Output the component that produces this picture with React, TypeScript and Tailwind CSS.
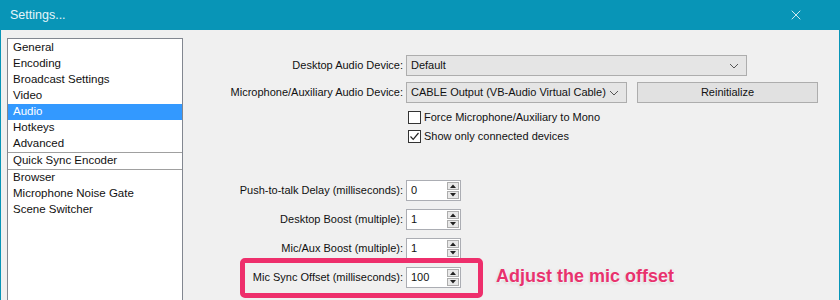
import { X } from "lucide-react";

const navItems = [
  ["General", "Encoding", "Broadcast Settings", "Video", "Audio", "Hotkeys", "Advanced"],
  ["Quick Sync Encoder"],
  ["Browser", "Microphone Noise Gate", "Scene Switcher"],
];

function Chevron() {
  return (
    <svg width="10" height="6" viewBox="0 0 10 6" className="shrink-0">
      <path d="M1 1 L5 5 L9 1" fill="none" stroke="#555" strokeWidth="1" />
    </svg>
  );
}

function Combo({ value, className }: { value: string; className: string }) {
  return (
    <div
      className={`h-[21px] flex items-center justify-between pl-[4px] pr-[7px] border border-[#adadad] bg-[#e5e5e5] text-[#111] whitespace-nowrap ${className}`}
    >
      <span>{value}</span>
      <Chevron />
    </div>
  );
}

function Check({ checked, label }: { checked?: boolean; label: string }) {
  return (
    <div className="h-[19px] flex items-center gap-[3px] ml-[2px]">
      <div className="w-[13px] h-[13px] border border-[#333] bg-white flex items-center justify-center">
        {checked && (
          <svg width="11" height="11" viewBox="0 0 11 11">
            <path d="M1.5 5.5 L4.2 8.3 L9.5 2" fill="none" stroke="#222" strokeWidth="1.2" />
          </svg>
        )}
      </div>
      <span>{label}</span>
    </div>
  );
}

function Spin({ value }: { value: string }) {
  return (
    <div className="w-[55px] h-[21px] flex items-center border border-[#abadb3] bg-white">
      <span className="flex-1 pl-[4px]">{value}</span>
      <div className="flex flex-col gap-[1px] mr-[1px]">
        <div className="w-[12px] h-[8px] border border-[#adadad] bg-[#e9e9e9] flex items-center justify-center">
          <svg width="6" height="4" viewBox="0 0 6 4">
            <path d="M0 4 L3 0.5 L6 4 Z" fill="#222" />
          </svg>
        </div>
        <div className="w-[12px] h-[8px] border border-[#adadad] bg-[#e9e9e9] flex items-center justify-center">
          <svg width="6" height="4" viewBox="0 0 6 4">
            <path d="M0 0 L3 3.5 L6 0 Z" fill="#222" />
          </svg>
        </div>
      </div>
    </div>
  );
}

function Row({ label, children }: { label: string; children: React.ReactNode }) {
  return (
    <div className="flex items-center">
      <div className="w-[223px] pr-[3px] text-right shrink-0 whitespace-nowrap">{label}</div>
      {children}
    </div>
  );
}

export default function App() {
  return (
    <div
      className="w-[840px] h-[300px] overflow-hidden flex flex-col text-[11px] leading-none text-[#111]"
      style={{ fontFamily: '"Liberation Sans", Arial, sans-serif' }}
    >
      <div className="h-[30px] shrink-0 bg-[#0895b7] flex items-center justify-between pl-[10px] pr-[36px] text-[#e6f6fa]">
        <span className="text-[12.5px]">Settings...</span>
        <X size={16} strokeWidth={1.2} className="text-white" />
      </div>

      <div className="flex-1 flex bg-[#f0f0f0] border-x border-[#0895b7]">
        <div className="pl-[6px] pt-[8px]">
          <div className="w-[176px] h-[300px] border border-[#828790] bg-white pt-[1px]">
            {navItems.map((group, gi) => (
              <div key={gi} className={gi > 0 ? "border-t border-[#a0a0a0]" : ""}>
                {group.map((item) => (
                  <div
                    key={item}
                    className={`h-[16px] flex items-center pl-[5px] text-[11.5px] ${
                      item === "Audio" ? "bg-[#3399ff] text-white" : ""
                    }`}
                  >
                    {item}
                  </div>
                ))}
              </div>
            ))}
          </div>
        </div>

        <div className="flex-1 flex flex-col pt-[25px]">
          <Row label="Desktop Audio Device:">
            <Combo value="Default" className="w-[341px]" />
          </Row>
          <div className="mt-[6px]">
            <Row label="Microphone/Auxiliary Audio Device:">
              <Combo value="CABLE Output (VB-Audio Virtual Cable)" className="w-[221px]" />
              <button className="ml-[10px] w-[181px] h-[21px] border border-[#adadad] bg-[#e1e1e1]">
                Reinitialize
              </button>
            </Row>
          </div>
          <div className="mt-[5px] ml-[223px] flex flex-col">
            <Check label="Force Microphone/Auxiliary to Mono" />
            <Check checked label="Show only connected devices" />
          </div>

          <div className="mt-[34px] flex flex-col gap-[8px]">
            <Row label="Push-to-talk Delay (milliseconds):">
              <Spin value="0" />
            </Row>
            <Row label="Desktop Boost (multiple):">
              <Spin value="1" />
            </Row>
            <Row label="Mic/Aux Boost (multiple):">
              <Spin value="1" />
            </Row>
            <div className="relative">
              <Row label="Mic Sync Offset (milliseconds):">
                <Spin value="100" />
              </Row>
              <div className="absolute left-[57px] top-[-9px] w-[243px] h-[40px] border-[5px] border-[#ee2f6c] rounded-[5px]" />
              <div
                className="absolute left-[313px] top-[0px] text-[18px] font-bold text-[#e8326d] whitespace-nowrap"
                style={{
                  fontFamily: '"Liberation Sans", sans-serif',
                  textShadow: "0 0 2px #fff, 1px 1px 2px #fff, 0 1px 3px rgba(0,0,0,0.25)",
                }}
              >
                Adjust the mic offset
              </div>
            </div>
          </div>
        </div>
      </div>
    </div>
  );
}
